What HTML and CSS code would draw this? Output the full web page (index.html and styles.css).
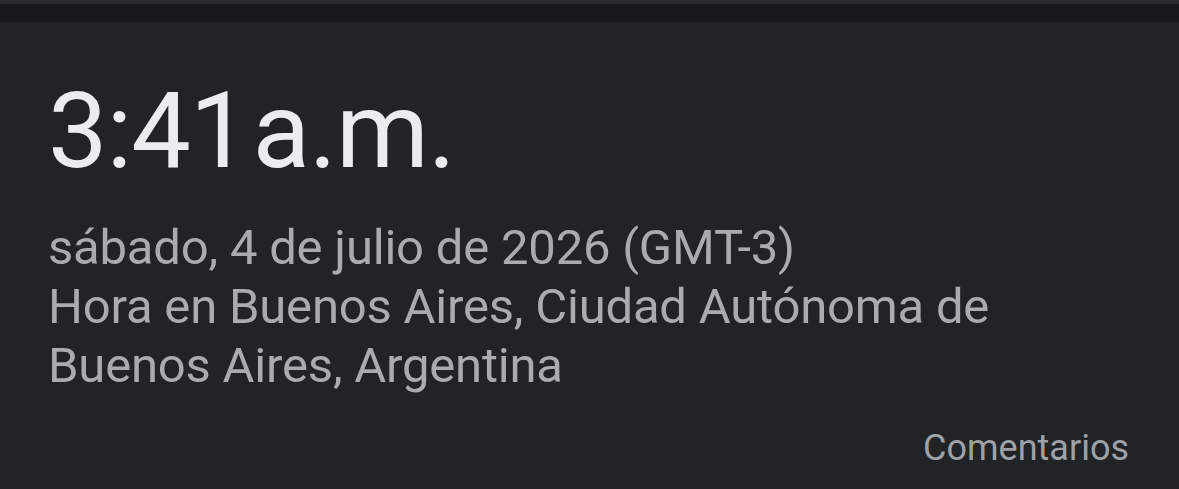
FILE: index.html
```html
<!DOCTYPE html>
<html>
	<head>
		<meta charset="UTF-8">
		<title>Hora</title>
		<link rel="stylesheet" href="styles.css">
	</head>
	<body>
		<div class="topbar"></div>
		<div class="card">
			<div class="time">3:41<span class="gap"></span>a.m.</div>
			<div class="info">
				<div>sábado, 4 de julio de 2026 (GMT-3)</div>
				<div>Hora en Buenos Aires, Ciudad Autónoma de Buenos Aires, Argentina</div>
			</div>
			<div class="foot">
				<span class="feedback">Comentarios</span>
			</div>
		</div>
	</body>
</html>
```

FILE: styles.css
```css
body {
	margin: 0;
	padding: 0;
	background: #222327;
	font-family: Roboto, "Noto Sans", sans-serif;
	overflow: hidden;
}

/* strip at the very top */
.topbar {
	height: 17px;
	background: #18191b;
	border-top: 4px solid #2b2c30;
	border-bottom: 1px solid #141517;
}

.card {
	height: 467px;
	padding: 0 50px 0 48px;
	box-sizing: border-box;
	display: flex;
	flex-direction: column;
}

.time {
	margin-top: 44px;
	font-size: 106px;
	line-height: 130px;
	height: 130px;
	color: #ebecee;
	letter-spacing: -1px;
}

.gap {
	display: inline-block;
	width: 4px;
}

.info {
	margin-top: 22px;
	font-size: 49px;
	line-height: 59px;
	color: #a9abaf;
	letter-spacing: -0.2px;
}

.foot {
	margin-top: auto;
	display: flex;
	justify-content: flex-end;
	padding-bottom: 17px;
}

.feedback {
	font-size: 36px;
	line-height: 48px;
	color: #9ea1a6;
}
```
